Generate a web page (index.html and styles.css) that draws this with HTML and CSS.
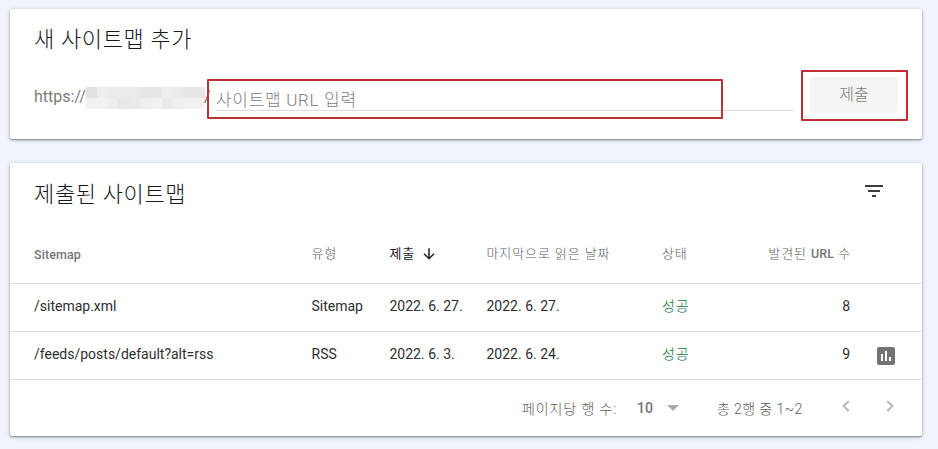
FILE: index.html
```html
<!DOCTYPE html>
<html lang="ko">
<head>
<meta charset="utf-8">
<title>Sitemap</title>
<link rel="stylesheet" href="styles.css">
</head>
<body>
<main class="page">
  <section class="card add-card">
    <h2 class="title title-add">새 사이트맵 추가</h2>
    <div class="form">
      <span class="prefix">https://</span>
      <svg class="mosaic" width="119" height="22" viewBox="0 0 11 2" preserveAspectRatio="none" shape-rendering="crispEdges">
        <path fill="#eeeeee" d="M0 0h11v2H0z"/>
        <path fill="#e1e1e2" d="M0 0h1v1H0z"/>
        <path fill="#ebebec" d="M2 0h2v1H2zM4 0h1v1H4zM8 0h1v1H8z"/>
        <path fill="#e7e7e8" d="M5 0h2v1H5zM9 0h2v1H9zM3 1h1v1H3z"/>
        <path fill="#f1f1f2" d="M0 1h2v1H0zM6 1h1v1H6zM9 1h2v1H9z"/>
        <path fill="#ebebec" d="M4 1h1v1H4zM7 1h1v1H7z"/>
      </svg>
      <span class="slash">/</span>
      <div class="field"><span class="placeholder">사이트맵 URL 입력</span></div>
      <button class="submit" disabled><span>제출</span></button>
    </div>
    <div class="mark mark-field"></div>
    <div class="mark mark-submit"></div>
  </section>

  <section class="card list-card">
    <header class="list-head">
      <h2 class="title title-list">제출된 사이트맵</h2>
      <svg class="filter" width="24" height="24" viewBox="0 0 24 24"><path fill="#3f3b40" d="M10 18h4v-2h-4v2zM3 6v2h18V6H3zm3 7h12v-2H6v2z"/></svg>
    </header>
    <div class="row labels">
      <span>Sitemap</span>
      <span>유형</span>
      <span class="sorted"><span>제출</span><svg width="14" height="14" viewBox="0 0 14 14"><path fill="none" stroke="#2b2b2d" stroke-width="1.6" d="M7 1.2v10.3M2 6.7l5 5 5-5"/></svg></span>
      <span>마지막으로 읽은 날짜</span>
      <span>상태</span>
      <span class="num count">발견된 <b>URL</b> 수</span>
    </div>
    <div class="row">
      <span>/sitemap.xml</span>
      <span>Sitemap</span>
      <span>2022. 6. 27.</span>
      <span>2022. 6. 27.</span>
      <span class="ok">성공</span>
      <span class="num">8</span>
    </div>
    <div class="row">
      <span>/feeds/posts/default?alt=rss</span>
      <span>RSS</span>
      <span>2022. 6. 3.</span>
      <span>2022. 6. 24.</span>
      <span class="ok">성공</span>
      <span class="num">9</span>
      <svg class="chart" width="18" height="18" viewBox="0 0 18 18"><rect width="18" height="18" rx="2" fill="#757275"/><path fill="#fff" d="M4 7h2v7H4zM8 4h2v10H8zM12 10h2v4h-2z"/></svg>
    </div>
    <footer class="pager">
      <span class="per-page">페이지당 행 수:</span>
      <span class="size">10</span>
      <svg width="12" height="6" viewBox="0 0 12 6"><path fill="#aaa" d="M0 0h12L6 6z"/></svg>
      <span class="range">총 2행 중 1~2</span>
      <svg class="prev" width="8" height="12" viewBox="0 0 8 12"><path fill="none" stroke="#b5b5b5" stroke-width="1.8" d="M6.8 1L1.6 6l5.2 5"/></svg>
      <svg class="next" width="8" height="12" viewBox="0 0 8 12"><path fill="none" stroke="#b5b5b5" stroke-width="1.8" d="M1.2 1l5.2 5-5.2 5"/></svg>
    </footer>
  </section>
</main>
</body>
</html>
```
FILE: styles.css
```css
* { box-sizing: border-box; }
body {
  margin: 0;
  height: 449px;
  overflow: hidden;
  background: #f1f4fc;
  font-family: Roboto, "Noto Sans CJK KR", sans-serif;
  color: #2e2e31;
}
.page {
  display: flex;
  flex-direction: column;
  gap: 24px;
  padding: 9px 16px 0 10px;
}
.card {
  position: relative;
  background: #fff;
  border-radius: 2px;
  box-shadow: 0 1px 2px rgba(0,0,0,.42), 0 1px 5px rgba(0,0,0,.16);
}
.add-card { height: 130px; padding-left: 24px; }
.list-card { height: 273px; }
.title {
  margin: 0;
  font-size: 22px;
  line-height: 30px;
  font-weight: 300;
  letter-spacing: .65px;
  white-space: nowrap;
  color: #17181b;
}
.title-add { padding-top: 16px; }
.title-list { padding-top: 1px; }
.form {
  display: flex;
  height: 36px;
  margin-top: 22px;
  white-space: nowrap;
}
.prefix { width: 52px; font-size: 16px; line-height: 39px; color: #7c7c7c; }
.mosaic { margin-top: 10px; flex: none; }
.slash { width: 11px; margin-left: -1px; font-size: 16px; line-height: 39px; color: #8c6a6c; }
.field {
  width: 579px;
  height: 34px;
  padding-left: 1px;
  border-bottom: 1px solid #dcdcdc;
  font-size: 17px;
  line-height: 46px;
  font-weight: 300;
  letter-spacing: .7px;
  color: #808080;
}
.submit {
  width: 88px;
  height: 36px;
  margin-left: 16px;
  padding: 0;
  border: 0;
  border-radius: 3px;
  background: #f4f4f4;
  font: 300 16px/34px Roboto, "Noto Sans CJK KR", sans-serif;
  color: #7d7d7d;
}
.mark {
  position: absolute;
  border: 2px solid #b93338;
  border-radius: 1px;
}
.mark-field { left: 197px; top: 70px; width: 516px; height: 40px; }
.mark-submit { left: 791px; top: 61px; width: 107px; height: 51px; border-color: #c22c33; }

.list-head {
  display: flex;
  justify-content: space-between;
  height: 63px;
  padding: 16px 36px 0 24px;
}
.row {
  display: grid;
  grid-template-columns: 277.5px 78px 97px 175.5px 88px 100px 1fr;
  height: 48px;
  padding-left: 24px;
  border-bottom: 1px solid #dfdfdf;
  font-size: 14px;
  line-height: 45px;
  white-space: nowrap;
}
.labels {
  height: 58px;
  font-size: 13px;
  line-height: 56px;
  font-weight: 300;
  letter-spacing: .9px;
  color: #5c5c5c;
}
.labels > span:first-child, .labels b {
  font-weight: 500;
  font-size: 12.5px;
  letter-spacing: .1px;
  color: #757575;
}
.labels > span:first-child { line-height: 58px; }
.sorted {
  display: flex;
  align-items: center;
  gap: 7px;
  height: 56px;
  font-weight: 400;
  color: #202124;
}
.num { text-align: right; }
.count { margin-right: -1px; }
.ok { font-weight: 300; letter-spacing: .9px; color: #087541; }
.chart { margin: 15px 0 0 27px; }
.pager {
  display: flex;
  align-items: center;
  height: 56px;
  padding-left: 512px;
  font-size: 14px;
  font-weight: 300;
  color: #5c5c5c;
  white-space: nowrap;
}
.per-page { width: 115px; letter-spacing: .9px; }
.size { width: 30px; font-weight: 500; color: #757575; }
.range { width: 125px; margin-left: 38px; letter-spacing: .4px; }
.prev, .next { margin-bottom: 4px; }
.next { margin-left: 36px; }
```
